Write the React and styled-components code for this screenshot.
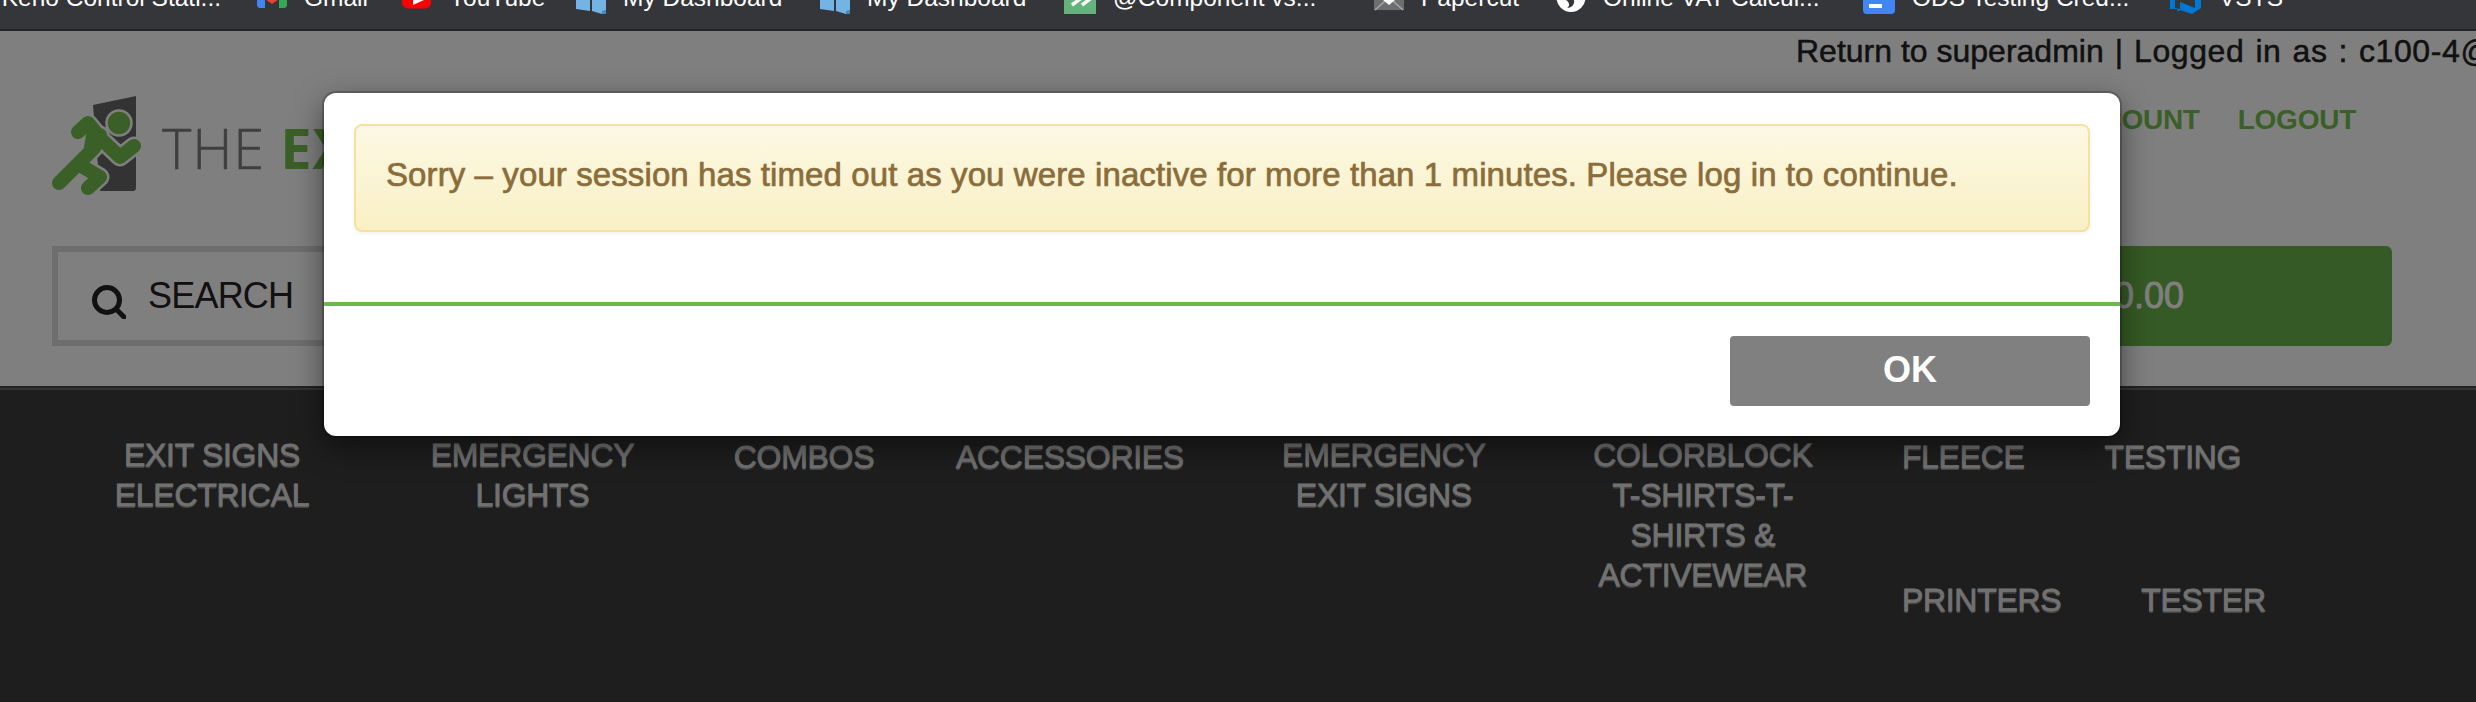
import React from 'react';
import styled, {createGlobalStyle} from 'styled-components';

const GlobalStyle = createGlobalStyle`
  html, body {
    margin: 0;
    background: #3c3c3c;
    font-family: "Liberation Sans", Arial, sans-serif;
    overflow: hidden;
  }
`;

const Frame = styled.div`
  width: 2476px;
  height: 702px;
  overflow: hidden;
`;

const BookmarkBar = styled.div`
  display: flex;
  height: 29px;
  padding-left: 257px;
  background: #35363a;
  border-bottom: 2px solid #242527;
  overflow: hidden;
`;

const Bookmarks = styled.div`
  display: flex;
  align-items: center;
  height: 30px;
  margin-top: -16px;
`;

const Bookmark = styled.div`
  display: flex;
  align-items: center;
  gap: 17px;
  width: ${p => p.$width}px;
  color: #fff;
  font-size: 24.5px;
  white-space: nowrap;
`;

const BookmarkLabel = styled.span`
  margin-bottom: 3px;
`;

const FirstBookmark = styled.div`
  width: 264px;
  margin: 0 36px 3px -300px;
  color: #fff;
  font-size: 24.5px;
  white-space: nowrap;
  text-align: right;
`;

const Page = styled.div`
  position: relative;
  height: 671px;
`;

const Header = styled.header`
  height: 355px;
  background: #fff;
  display: flex;
  flex-direction: column;
`;

const TopLine = styled.div`
  padding-left: 1796px;
  height: 54px;
  font-size: 32px;
  line-height: 40px;
  color: #222;
  white-space: nowrap;
  -webkit-text-stroke: 0.5px #222;
`;

const TopDivider = styled.span`
  margin: 0 11px;
`;

const LoggedIn = styled.span`
  letter-spacing: 0.6px;
  word-spacing: 1.5px;
`;

const BrandRow = styled.div`
  display: flex;
  justify-content: space-between;
  height: 161px;
  padding: 8px 120px 0 52px;
  box-sizing: border-box;
`;

const Logo = styled.div`
  display: flex;
  align-items: flex-start;
`;

const LogoName = styled.div`
  margin: 16px 0 0 20px;
  font-family: "Open Sans", sans-serif;
  font-weight: 300;
  font-size: 56px;
  line-height: 76px;
  color: #7e7e7e;
  white-space: nowrap;
  letter-spacing: 0.8px;
  -webkit-text-stroke: 0.5px #7e7e7e;
`;

const LogoGreen = styled.b`
  font-weight: 700;
  color: #74c04f;
  -webkit-text-stroke: 0;
`;

const AccountLinks = styled.nav`
  display: flex;
  gap: 38px;
  padding-top: 9px;
`;

const AccountLink = styled.a`
  font-size: 28px;
  line-height: 36px;
  font-weight: 700;
  letter-spacing: -0.25px;
  color: #74c04f;
`;

const SearchRow = styled.div`
  display: flex;
  justify-content: space-between;
  padding: 0 84px 0 52px;
`;

const SearchBox = styled.div`
  display: flex;
  align-items: center;
  gap: 22px;
  width: 1400px;
  height: 100px;
  padding-left: 34px;
  box-sizing: border-box;
  border: 6px solid #dcdcdc;
  font-size: 36px;
  letter-spacing: -0.8px;
  color: #222;

  svg {
    margin-top: 12px;
  }
`;

const Cart = styled.div`
  display: flex;
  align-items: center;
  justify-content: flex-end;
  width: 480px;
  height: 100px;
  padding-right: 208px;
  box-sizing: border-box;
  border-radius: 6px;
  background: #6cb44a;
  color: #fff;
  font-size: 36px;
  -webkit-text-stroke: 0.8px #fff;
`;

const NavBar = styled.nav`
  display: flex;
  align-items: flex-start;
  height: 316px;
  padding: 47px 0 0 51px;
  box-sizing: border-box;
  background: #3c3c3c;
  border-top: 2px solid #444;
  box-shadow: inset 0 2px 0 #666;
`;

const NavItem = styled.a`
  display: block;
  flex: none;
  width: ${p => (p.$width ? `${p.$width}px` : 'auto')};
  margin: ${p => (p.$single ? '2px' : '0')} 40px 0;
  font-size: 32px;
  line-height: 40px;
  text-align: center;
  color: #e2e2e2;
  -webkit-text-stroke: 0.8px #e2e2e2;
  text-shadow: 0 2px 0 #888;
  letter-spacing: -0.3px;
`;

const NavWrapGroup = styled.div`
  display: flex;
  flex-wrap: wrap;
  width: 420px;
  gap: 103px 80px;
  margin-left: 40px;
  padding-top: 2px;
`;

const GroupItem = styled(NavItem)`
  margin: 0;
`;

const Overlay = styled.div`
  position: absolute;
  inset: 0;
  padding: 62px 0 0 324px;
  background: rgba(0, 0, 0, 0.5);
`;

const Modal = styled.div`
  display: flex;
  flex-direction: column;
  width: 1796px;
  height: 343px;
  box-sizing: border-box;
  border-radius: 12px;
  background: #fff;
  box-shadow: 0 0 0 2px rgba(0, 0, 0, 0.2), 0 10px 30px rgba(0, 0, 0, 0.5);
`;

const ModalBody = styled.div`
  height: 213px;
  padding: 31px 30px 0;
  box-sizing: border-box;
  border-bottom: 4px solid #6cb84d;
`;

const Alert = styled.div`
  height: 108px;
  padding-left: 30px;
  box-sizing: border-box;
  border: 2px solid #f5e39d;
  border-radius: 8px;
  background: linear-gradient(to bottom, #fdf8e4, #f9f0c4);
  box-shadow: 0 2px 4px rgba(0, 0, 0, 0.05);
  color: #8a6d3b;
  font-size: 33px;
  line-height: 98px;
  letter-spacing: 0.1px;
  white-space: nowrap;
  -webkit-text-stroke: 0.7px #8a6d3b;
`;

const ModalFooter = styled.div`
  display: flex;
  justify-content: flex-end;
  padding: 30px 30px 0;
`;

const OkButton = styled.button`
  width: 360px;
  height: 70px;
  padding: 0 0 3px;
  border: 0;
  border-radius: 4px;
  background: #808080;
  color: #fff;
  font-family: inherit;
  font-size: 36px;
  font-weight: 700;
`;

const GmailIcon = () => (
  <svg width="30" height="30" viewBox="0 0 30 30">
    <path d="M0 0H8V24H2L0 22Z" fill="#4285f4" />
    <path d="M22 0H30V22L28 24H22Z" fill="#34a853" />
    <path d="M8 0H22V15L15 20 8 15Z" fill="#ea4335" />
  </svg>
);

const YoutubeIcon = () => (
  <svg width="30" height="30" viewBox="0 0 30 30">
    <rect x="0" y="0" width="29" height="24.5" rx="6" fill="#f00" />
    <path d="M11 10 22 16 11 21Z" fill="#fff" />
  </svg>
);

const DashboardIcon = () => (
  <svg width="30" height="30" viewBox="0 0 30 30">
    <path d="M0 0H14V27L0 25Z" fill="#74b4e4" />
    <path d="M16 0H30V30H26L16 27Z" fill="#74b4e4" />
    <path d="M26 27 30 26V30H26Z" fill="#4a86b8" />
  </svg>
);

const ComponentIcon = () => (
  <svg width="32" height="30" viewBox="0 0 32 30">
    <rect width="32" height="30" fill="#66b27c" />
    <path d="M10 8 16 15 8 21M20 8 26 15 18 21" fill="none" stroke="#fff" strokeWidth="3.5" />
  </svg>
);

const PapercutIcon = () => (
  <svg width="30" height="30" viewBox="0 0 30 30">
    <rect width="30" height="26" fill="#6d6e70" />
    <path d="M1 26 11 17M29 26 19 17" stroke="#a6a7a8" strokeWidth="1.5" />
    <path d="M2 10 15 21 28 10Z" fill="#fff" />
  </svg>
);

const VatIcon = () => (
  <svg width="30" height="30" viewBox="0 0 30 30">
    <circle cx="15" cy="13.5" r="14.5" fill="#fff" />
    <path d="M10 16H18C19 21 15 24 11 24 14 22 14 19 10 16Z" fill="#35363a" />
  </svg>
);

const DocIcon = () => (
  <svg width="32" height="30" viewBox="0 0 32 30">
    <rect width="32" height="30" rx="4" fill="#4285f4" />
    <rect x="6" y="20" width="13" height="4" fill="#fff" />
  </svg>
);

const VstsIcon = () => (
  <svg width="32" height="30" viewBox="0 0 32 30">
    <path d="M0 0H5V24L10 25 10 18 25 24V0H31V24L22 30 10 26 8 28 7 25 0 25Z" fill="#0078d4" />
  </svg>
);

const SearchIcon = () => (
  <svg width="34" height="34" viewBox="0 0 34 34" fill="none" stroke="#222" strokeWidth="5" strokeLinecap="round">
    <circle cx="15" cy="15" r="12.5" />
    <path d="M25 25 32 32" />
  </svg>
);

const figure = 'M9 90 44 55 50 42M28 39 38 30 52 47 70 64 84 53M33 74 50 84 38 95';

const RunnerLogo = () => (
  <svg width="90" height="102" viewBox="2 0 90 102">
    <path d="M43 12 86 3V96L84 98H50Z" fill="#666" />
    <circle cx="69" cy="30" r="12.5" fill="#74c04f" stroke="#fff" strokeWidth="2.5" />
    <path d={figure} fill="none" stroke="#fff" strokeWidth="19" strokeLinecap="round" strokeLinejoin="round" />
    <path d={figure} fill="none" stroke="#74c04f" strokeWidth="14" strokeLinecap="round" strokeLinejoin="round" />
    <path d="M38 30 53 48 42 58 32 66Z" fill="#74c04f" />
  </svg>
);

const bookmarks = [
  {icon: <GmailIcon />, label: 'Gmail', width: 145},
  {icon: <YoutubeIcon />, label: 'YouTube', width: 174},
  {icon: <DashboardIcon />, label: 'My Dashboard', width: 244},
  {icon: <DashboardIcon />, label: 'My Dashboard', width: 244},
  {icon: <ComponentIcon />, label: '@Component vs...', width: 310},
  {icon: <PapercutIcon />, label: 'Papercut', width: 182},
  {icon: <VatIcon />, label: 'Online VAT Calcul...', width: 307},
  {icon: <DocIcon />, label: 'ODS Testing Cred...', width: 307},
  {icon: <VstsIcon />, label: 'VSTS', width: 120}
];

const App = () => (
  <Frame>
    <GlobalStyle />
    <BookmarkBar>
      <Bookmarks>
        <FirstBookmark>Keno Control Stati...</FirstBookmark>
        {bookmarks.map((item, i) => (
          <Bookmark key={i} $width={item.width}>
            {item.icon}
            <BookmarkLabel>{item.label}</BookmarkLabel>
          </Bookmark>
        ))}
      </Bookmarks>
    </BookmarkBar>
    <Page>
      <Header>
        <TopLine>
          Return to superadmin<TopDivider>|</TopDivider><LoggedIn>Logged in as : c100-4@</LoggedIn>
        </TopLine>
        <BrandRow>
          <Logo>
            <RunnerLogo />
            <LogoName>THE <LogoGreen>EXIT</LogoGreen></LogoName>
          </Logo>
          <AccountLinks>
            <AccountLink>ACCOUNT</AccountLink>
            <AccountLink>LOGOUT</AccountLink>
          </AccountLinks>
        </BrandRow>
        <SearchRow>
          <SearchBox>
            <SearchIcon />
            SEARCH
          </SearchBox>
          <Cart>$0.00</Cart>
        </SearchRow>
      </Header>
      <NavBar>
        <NavItem $width={242}>EXIT SIGNS ELECTRICAL</NavItem>
        <NavItem $width={239}>EMERGENCY LIGHTS</NavItem>
        <NavItem $single $width={144}>COMBOS</NavItem>
        <NavItem $single>ACCESSORIES</NavItem>
        <NavItem $width={240}>EMERGENCY EXIT SIGNS</NavItem>
        <NavItem $width={238}>COLORBLOCK T-SHIRTS-T-SHIRTS &amp; ACTIVEWEAR</NavItem>
        <NavWrapGroup>
          <GroupItem>FLEECE</GroupItem>
          <GroupItem>TESTING</GroupItem>
          <GroupItem>PRINTERS</GroupItem>
          <GroupItem>TESTER</GroupItem>
        </NavWrapGroup>
      </NavBar>
      <Overlay>
        <Modal>
          <ModalBody>
            <Alert>Sorry – your session has timed out as you were inactive for more than 1 minutes. Please log in to continue.</Alert>
          </ModalBody>
          <ModalFooter>
            <OkButton>OK</OkButton>
          </ModalFooter>
        </Modal>
      </Overlay>
    </Page>
  </Frame>
);

export default App;
